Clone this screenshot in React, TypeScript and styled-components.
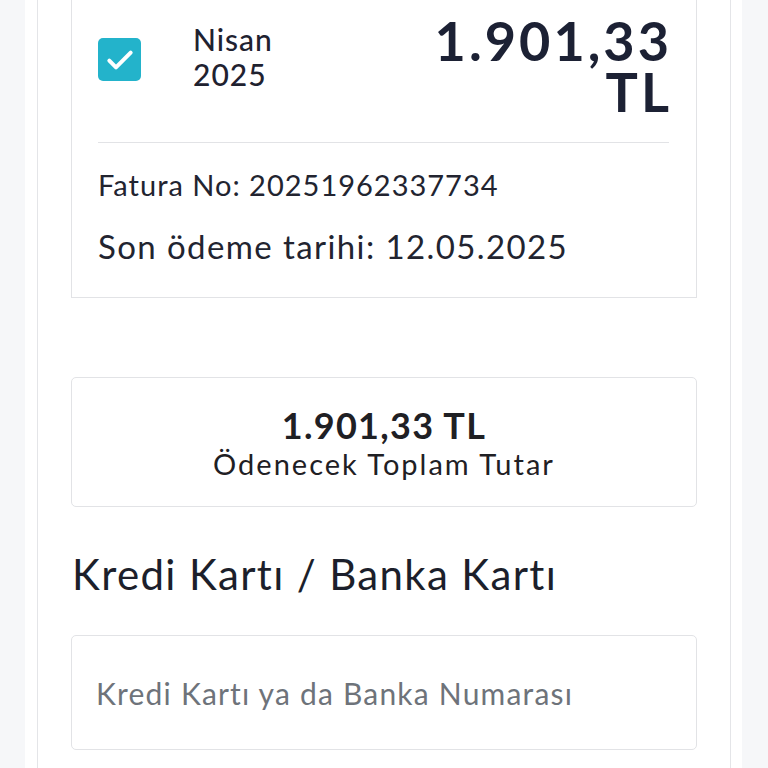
import React from "react";
import styled, { createGlobalStyle } from "styled-components";

const Global = createGlobalStyle`
  html, body { margin: 0; padding: 0; background: #f6f7f9; }
  body { font-family: Lato, "Noto Sans", sans-serif; color: #1f2230; }
  * { box-sizing: border-box; }
`;

const Page = styled.div`
  height: 768px;
  overflow: hidden;
  background: #f6f7f9;
  padding: 0 26px 0 25px;
`;

const Column = styled.div`
  background: #ffffff;
  height: 100%;
  padding: 0 11px 0 12px;
`;

const Panel = styled.div`
  height: 100%;
  border-left: 1.5px solid #e4e5e8;
  border-right: 1.5px solid #e4e5e8;
  padding: 0 33px 0 33px;
  display: flex;
  flex-direction: column;
`;

const InvoiceCard = styled.div`
  margin-top: -40px;
  border: 1.5px solid #e2e3e6;
  border-top: none;
  padding: 55px 27px 31px 26px;
  background: #fff;
`;

const TopRow = styled.div`
  display: flex;
  align-items: flex-start;
`;

const Check = styled.div`
  width: 43px;
  height: 43px;
  border-radius: 5px;
  background: #23b3cb;
  margin-top: 23px;
  display: flex;
  align-items: center;
  justify-content: center;
  flex-shrink: 0;
`;

const Period = styled.div`
  margin-left: 52px;
  margin-top: 7px;
  font-size: 30px;
  line-height: 35px;
  font-weight: 500;
  letter-spacing: 1px;
  color: #1f2230;
`;

const BigAmount = styled.div`
  margin-left: auto;
  margin-right: -3px;
  text-align: right;
  font-size: 54px;
  line-height: 51px;
  font-weight: 700;
  letter-spacing: 3px;
  color: #1c2134;
`;

const Divider = styled.hr`
  border: none;
  border-top: 1.5px solid #e2e3e6;
  margin: 25px 0 0 0;
`;

const Info = styled.div<{ $size: number; $top: number; $ls: number }>`
  font-size: ${(p) => p.$size}px;
  letter-spacing: ${(p) => p.$ls}px;
  line-height: 1.2;
  margin-top: ${(p) => p.$top}px;
  color: #222430;
`;

const SummaryCard = styled.div`
  margin-top: 79px;
  height: 130px;
  border: 1.5px solid #e2e3e6;
  border-radius: 5px;
  display: flex;
  flex-direction: column;
  align-items: center;
  justify-content: center;
  gap: 1px;
`;

const SumAmount = styled.div`
  font-size: 36px;
  font-weight: 700;
  line-height: 42px;
  letter-spacing: 1.3px;
  color: #1f2024;
`;

const SumLabel = styled.div`
  font-size: 29px;
  line-height: 34px;
  letter-spacing: 2px;
  color: #1f2024;
`;

const Heading = styled.h2`
  margin: 42px 0 0 1px;
  font-size: 42px;
  font-weight: 400;
  line-height: 50px;
  letter-spacing: 1.35px;
  color: #1c1f2b;
`;

const CardInput = styled.input`
  margin-top: 36px;
  height: 115px;
  width: 100%;
  border: 1.5px solid #e2e3e6;
  border-radius: 5px;
  padding: 0 24px;
  font-family: Lato, "Noto Sans", sans-serif;
  font-size: 30px;
  letter-spacing: 1.2px;
  color: #222;
  outline: none;
  &::placeholder { color: #6e737a; }
`;

export default function App() {
  return (
    <>
      <Global />
      <Page>
        <Column>
          <Panel>
            <InvoiceCard>
              <TopRow>
                <Check>
                  <svg width="32" height="32" viewBox="0 0 24 24" fill="none">
                    <path d="M4 12.5l5 5L20 6.5" stroke="#fff" strokeWidth="3" strokeLinecap="round" strokeLinejoin="round" />
                  </svg>
                </Check>
                <Period>
                  Nisan
                  <br />
                  2025
                </Period>
                <BigAmount>
                  1.901,33
                  <br />
                  TL
                </BigAmount>
              </TopRow>
              <Divider />
              <Info $size={29} $top={25} $ls={1}>Fatura No: 20251962337734</Info>
              <Info $size={33} $top={24} $ls={1.4}>Son ödeme tarihi: 12.05.2025</Info>
            </InvoiceCard>
            <SummaryCard>
              <SumAmount>1.901,33 TL</SumAmount>
              <SumLabel>Ödenecek Toplam Tutar</SumLabel>
            </SummaryCard>
            <Heading>Kredi Kartı / Banka Kartı</Heading>
            <CardInput placeholder="Kredi Kartı ya da Banka Numarası" />
          </Panel>
        </Column>
      </Page>
    </>
  );
}
